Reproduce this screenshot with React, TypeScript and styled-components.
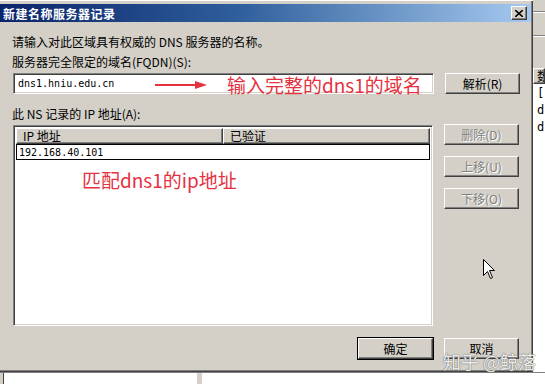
import React from "react"
import styled, { createGlobalStyle, css } from "styled-components"

const GlobalStyle = createGlobalStyle`
  html, body {
    margin: 0;
    padding: 0;
    background: #d4d0c8;
    overflow: hidden;
  }
  body {
    font-family: "Noto Sans CJK SC", "Liberation Sans", sans-serif;
    font-size: 12px;
    color: #000;
  }
`

const Screen = styled.div`
  width: 545px;
  height: 384px;
  display: grid;
  grid-template-columns: 533px 12px;
  grid-template-rows: 372px 12px;
  overflow: hidden;
  position: relative;
`

const Dialog = styled.div`
  position: relative;
  background: #d4d0c8;
  box-shadow: inset -1px -1px 0 #404040, inset -2px -2px 0 #808080;
  padding-top: 3px;
  display: flex;
  flex-direction: column;
  border-top: 1px solid #fff;
  box-sizing: border-box;
`

const TitleBar = styled.div`
  height: 18px;
  margin-right: 2px;
  background: linear-gradient(90deg, #0a246a 0%, #2f5f9c 45%, #a6caf0 100%);
  display: flex;
  align-items: center;
  justify-content: space-between;
  padding: 0 4px 0 3px;
`

const Title = styled.span`
  color: #fff;
  font-weight: bold;
  font-size: 12px;
  letter-spacing: 0.5px;
`

const raised = css`
  background: #d4d0c8;
  border: 1px solid;
  border-color: #fff #404040 #404040 #fff;
  box-shadow: inset -1px -1px 0 #808080;
  box-sizing: border-box;
`

const CloseBox = styled.div`
  ${raised};
  width: 16px;
  height: 14px;
  display: flex;
  align-items: center;
  justify-content: center;
`

const Body = styled.div`
  display: flex;
  flex-direction: column;
  padding: 12px 0 0 12px;
`

const Text = styled.div<{ $top?: number }>`
  height: 16px;
  line-height: 16px;
  white-space: nowrap;
  margin-top: ${(p) => p.$top ?? 0}px;
`

const Row = styled.div<{ $top?: number }>`
  display: flex;
  align-items: flex-start;
  gap: 11px;
  margin-top: ${(p) => p.$top ?? 0}px;
`

const sunken = css`
  background: #fff;
  border: 1px solid;
  border-color: #808080 #fff #fff #808080;
  box-shadow: inset 1px 1px 0 #404040, inset -1px -1px 0 #d4d0c8;
  box-sizing: border-box;
`

const Input = styled.div`
  ${sunken};
  position: relative;
  width: 421px;
  height: 21px;
  margin-left: 1px;
  display: flex;
  align-items: center;
  padding-left: 4px;
  font-family: "DejaVu Sans Mono", "Liberation Mono", monospace;
  font-size: 10px;
`

const Note = styled.span<{ $x: number; $y: number }>`
  position: absolute;
  left: ${(p) => p.$x}px;
  top: ${(p) => p.$y}px;
  color: #e5323f;
  font-family: "Noto Sans CJK SC", "Liberation Sans", sans-serif;
  font-size: 19px;
  line-height: 22px;
  white-space: nowrap;
`

const Arrow = styled.svg`
  position: absolute;
  left: 141px;
  top: 6px;
`

const Button = styled.div<{ $disabled?: boolean; $default?: boolean }>`
  ${raised};
  width: 75px;
  height: 21px;
  display: flex;
  align-items: center;
  justify-content: center;
  font-size: 12px;
  white-space: nowrap;
  ${(p) =>
    p.$disabled &&
    css`
      color: #808080;
      text-shadow: 1px 1px 0 #fff;
    `}
  ${(p) =>
    p.$default &&
    css`
      outline: 1px solid #000;
    `}
`

const ButtonCol = styled.div`
  display: flex;
  flex-direction: column;
  gap: 11px;
  margin-top: -1px;
`

const List = styled.div`
  ${sunken};
  position: relative;
  width: 420px;
  height: 201px;
  margin-left: 1px;
  padding: 2px 2px 0 2px;
`

const Header = styled.div`
  display: grid;
  grid-template-columns: 207px 1fr;
  height: 16px;
`

const HeadCell = styled.div`
  ${raised};
  padding-left: 6px;
  line-height: 13px;
  font-size: 12px;
  white-space: nowrap;
`

const ListItem = styled.div`
  height: 16px;
  border: 1px solid #000;
  box-sizing: border-box;
  display: flex;
  align-items: center;
  padding-left: 2px;
  font-family: "DejaVu Sans Mono", "Liberation Mono", monospace;
  font-size: 10px;
`

const Footer = styled.div`
  display: flex;
  justify-content: flex-end;
  gap: 11px;
  width: 507px;
  margin-top: 12px;
`

const Watermark = styled.span`
  position: absolute;
  left: 443px;
  top: 349px;
  font-size: 18px;
  line-height: 22px;
  color: rgba(255, 255, 255, 0.9);
  text-shadow: 0 0 1px #666, 0 0 1px #666;
  white-space: nowrap;
`

const Cursor = styled.svg`
  position: absolute;
  left: 483px;
  top: 258px;
`

const Side = styled.div`
  background: #d4d0c8;
  display: flex;
  flex-direction: column;
  padding-top: 11px;
`

const SideLine = styled.div<{ $h: number }>`
  height: ${(p) => p.$h}px;
  border-top: 1px solid #808080;
  box-shadow: inset 0 1px 0 #fff;
`

const SideHead = styled.div`
  ${raised};
  height: 16px;
  padding-left: 3px;
  line-height: 13px;
  font-size: 12px;
  overflow: hidden;
  white-space: nowrap;
`

const SideList = styled.div`
  flex: 1;
  background: #fff;
  padding: 1px 0 0 4px;
  font-family: "DejaVu Sans Mono", "Liberation Mono", monospace;
  font-size: 12px;
  line-height: 17px;
`

const Bottom = styled.div`
  grid-column: 1 / span 2;
  display: grid;
  grid-template-columns: 3px 1px 193px 5px 1fr;
  background: #fff;
  border-top: 1px solid #808080;
`

const Strip = styled.div<{ $c: string }>`
  background: ${(p) => p.$c};
`

export default function App() {
  return (
    <>
      <GlobalStyle />
      <Screen>
        <Dialog>
          <TitleBar>
            <Title>新建名称服务器记录</Title>
            <CloseBox>
              <svg width="8" height="7" viewBox="0 0 8 7">
                <path d="M0 0 L8 7 M8 0 L0 7" stroke="#000" strokeWidth="1.6" />
              </svg>
            </CloseBox>
          </TitleBar>
          <Body>
            <Text>请输入对此区域具有权威的 DNS 服务器的名称。</Text>
            <Text $top={4}>服务器完全限定的域名(FQDN)(S):</Text>
            <Row $top={3}>
              <Input>
                dns1.hniu.edu.cn
                <Arrow width="52" height="10" viewBox="0 0 52 10">
                  <line x1="0" y1="5" x2="42" y2="5" stroke="#e5323f" strokeWidth="2" />
                  <polygon points="40,1 52,5 40,9" fill="#e5323f" />
                </Arrow>
                <Note $x={213} $y={0}>输入完整的dns1的域名</Note>
              </Input>
              <Button>解析(R)</Button>
            </Row>
            <Text $top={12}>此 NS 记录的 IP 地址(A):</Text>
            <Row $top={3}>
              <List>
                <Header>
                  <HeadCell>IP 地址</HeadCell>
                  <HeadCell>已验证</HeadCell>
                </Header>
                <ListItem>192.168.40.101</ListItem>
                <Note $x={68} $y={43}>匹配dns1的ip地址</Note>
              </List>
              <ButtonCol>
                <Button $disabled>删除(D)</Button>
                <Button $disabled>上移(U)</Button>
                <Button $disabled>下移(O)</Button>
              </ButtonCol>
            </Row>
            <Footer>
              <Button $default>确定</Button>
              <Button>取消</Button>
            </Footer>
          </Body>
          <Cursor width="13" height="21" viewBox="0 0 13 21">
            <path d="M0.5 0.5 L0.5 16.5 L4.5 12.5 L7.5 19.5 L9.5 18.5 L6.5 11.5 L11.5 11.5 Z" fill="#fff" stroke="#000" strokeWidth="1" />
          </Cursor>
          <Watermark>知乎 @鲸落</Watermark>
        </Dialog>
        <Side>
          <SideLine $h={23} />
          <SideLine $h={32} />
          <SideHead>数据</SideHead>
          <SideList>
            [<br />d<br />d
          </SideList>
        </Side>
        <Bottom>
          <Strip $c="#d4d0c8" />
          <Strip $c="#404040" />
          <Strip $c="#fff" />
          <Strip $c="#d4d0c8" />
          <Strip $c="#fff" />
        </Bottom>
      </Screen>
    </>
  )
}
